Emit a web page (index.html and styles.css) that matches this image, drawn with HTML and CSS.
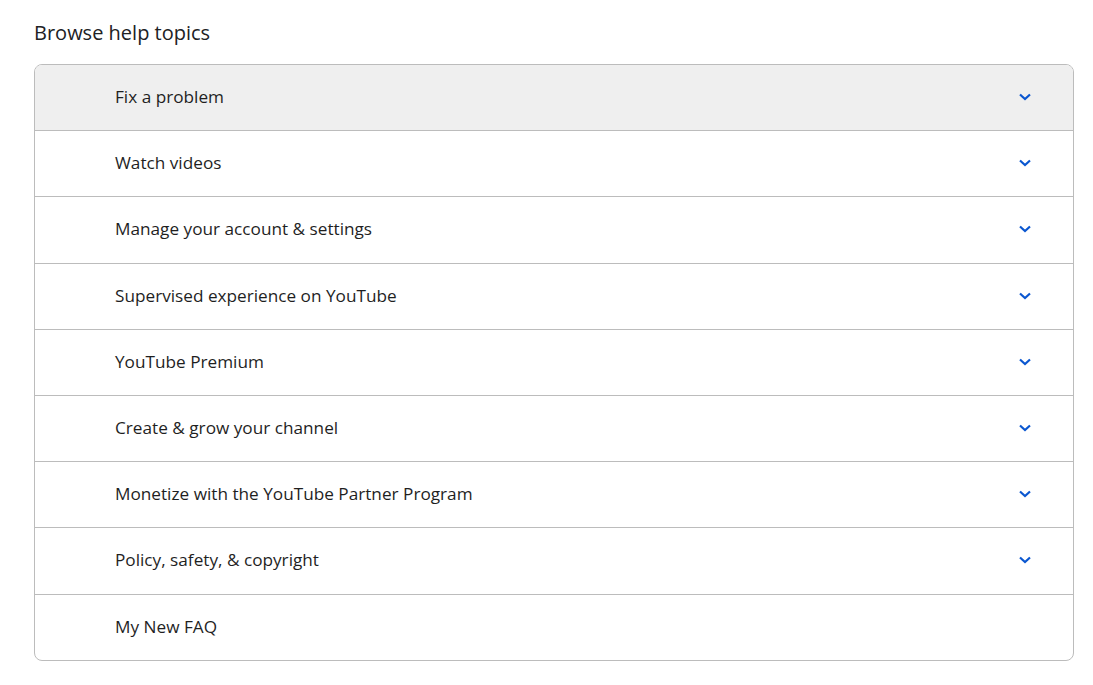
FILE: index.html
```html
<!DOCTYPE html>
<html lang="en">
<head>
<meta charset="utf-8">
<title>Browse help topics</title>
<link rel="stylesheet" href="styles.css">
</head>
<body>
<section class="topics">
  <h2 class="topics-title">Browse help topics</h2>
  <div class="accordion">
    <div class="row row-active"><span class="label">Fix a problem</span><svg class="chev" viewBox="0 0 12 8"><path d="M1 1.5 L6 6 L11 1.5"/></svg></div>
    <div class="row"><span class="label">Watch videos</span><svg class="chev" viewBox="0 0 12 8"><path d="M1 1.5 L6 6 L11 1.5"/></svg></div>
    <div class="row"><span class="label">Manage your account &amp; settings</span><svg class="chev" viewBox="0 0 12 8"><path d="M1 1.5 L6 6 L11 1.5"/></svg></div>
    <div class="row"><span class="label">Supervised experience on YouTube</span><svg class="chev" viewBox="0 0 12 8"><path d="M1 1.5 L6 6 L11 1.5"/></svg></div>
    <div class="row"><span class="label">YouTube Premium</span><svg class="chev" viewBox="0 0 12 8"><path d="M1 1.5 L6 6 L11 1.5"/></svg></div>
    <div class="row"><span class="label">Create &amp; grow your channel</span><svg class="chev" viewBox="0 0 12 8"><path d="M1 1.5 L6 6 L11 1.5"/></svg></div>
    <div class="row"><span class="label">Monetize with the YouTube Partner Program</span><svg class="chev" viewBox="0 0 12 8"><path d="M1 1.5 L6 6 L11 1.5"/></svg></div>
    <div class="row"><span class="label">Policy, safety, &amp; copyright</span><svg class="chev" viewBox="0 0 12 8"><path d="M1 1.5 L6 6 L11 1.5"/></svg></div>
    <div class="row"><span class="label">My New FAQ</span></div>
  </div>
</section>
</body>
</html>
```

FILE: styles.css
```css
* { box-sizing: border-box; }
html, body { margin: 0; padding: 0; background: #ffffff; }
body {
  font-family: "Open Sans", "Noto Sans", sans-serif;
  color: #1f1f1f;
}
.topics {
  padding: 20px 19px 0 34px;
}
.topics-title {
  margin: 0 0 18px 0;
  font-size: 20px;
  font-weight: 400;
  line-height: 26px;
  color: #202124;
}
.accordion {
  border: 1px solid #bcbcbc;
  border-radius: 8px;
  overflow: hidden;
}
.row {
  display: flex;
  align-items: center;
  justify-content: space-between;
  height: 66.2px;
  padding: 0 42px 1px 80px;
  border-top: 1px solid #bcbcbc;
}
.row:first-child { border-top: none; height: 65.2px; }
.row-active { background: #efefef; }
.label {
  font-size: 17.2px;
  line-height: 24px;
  color: #1f1f1f;
}
.chev {
  width: 12px;
  height: 8px;
  fill: none;
  stroke: #0b57d0;
  stroke-width: 2.2;
}
```
